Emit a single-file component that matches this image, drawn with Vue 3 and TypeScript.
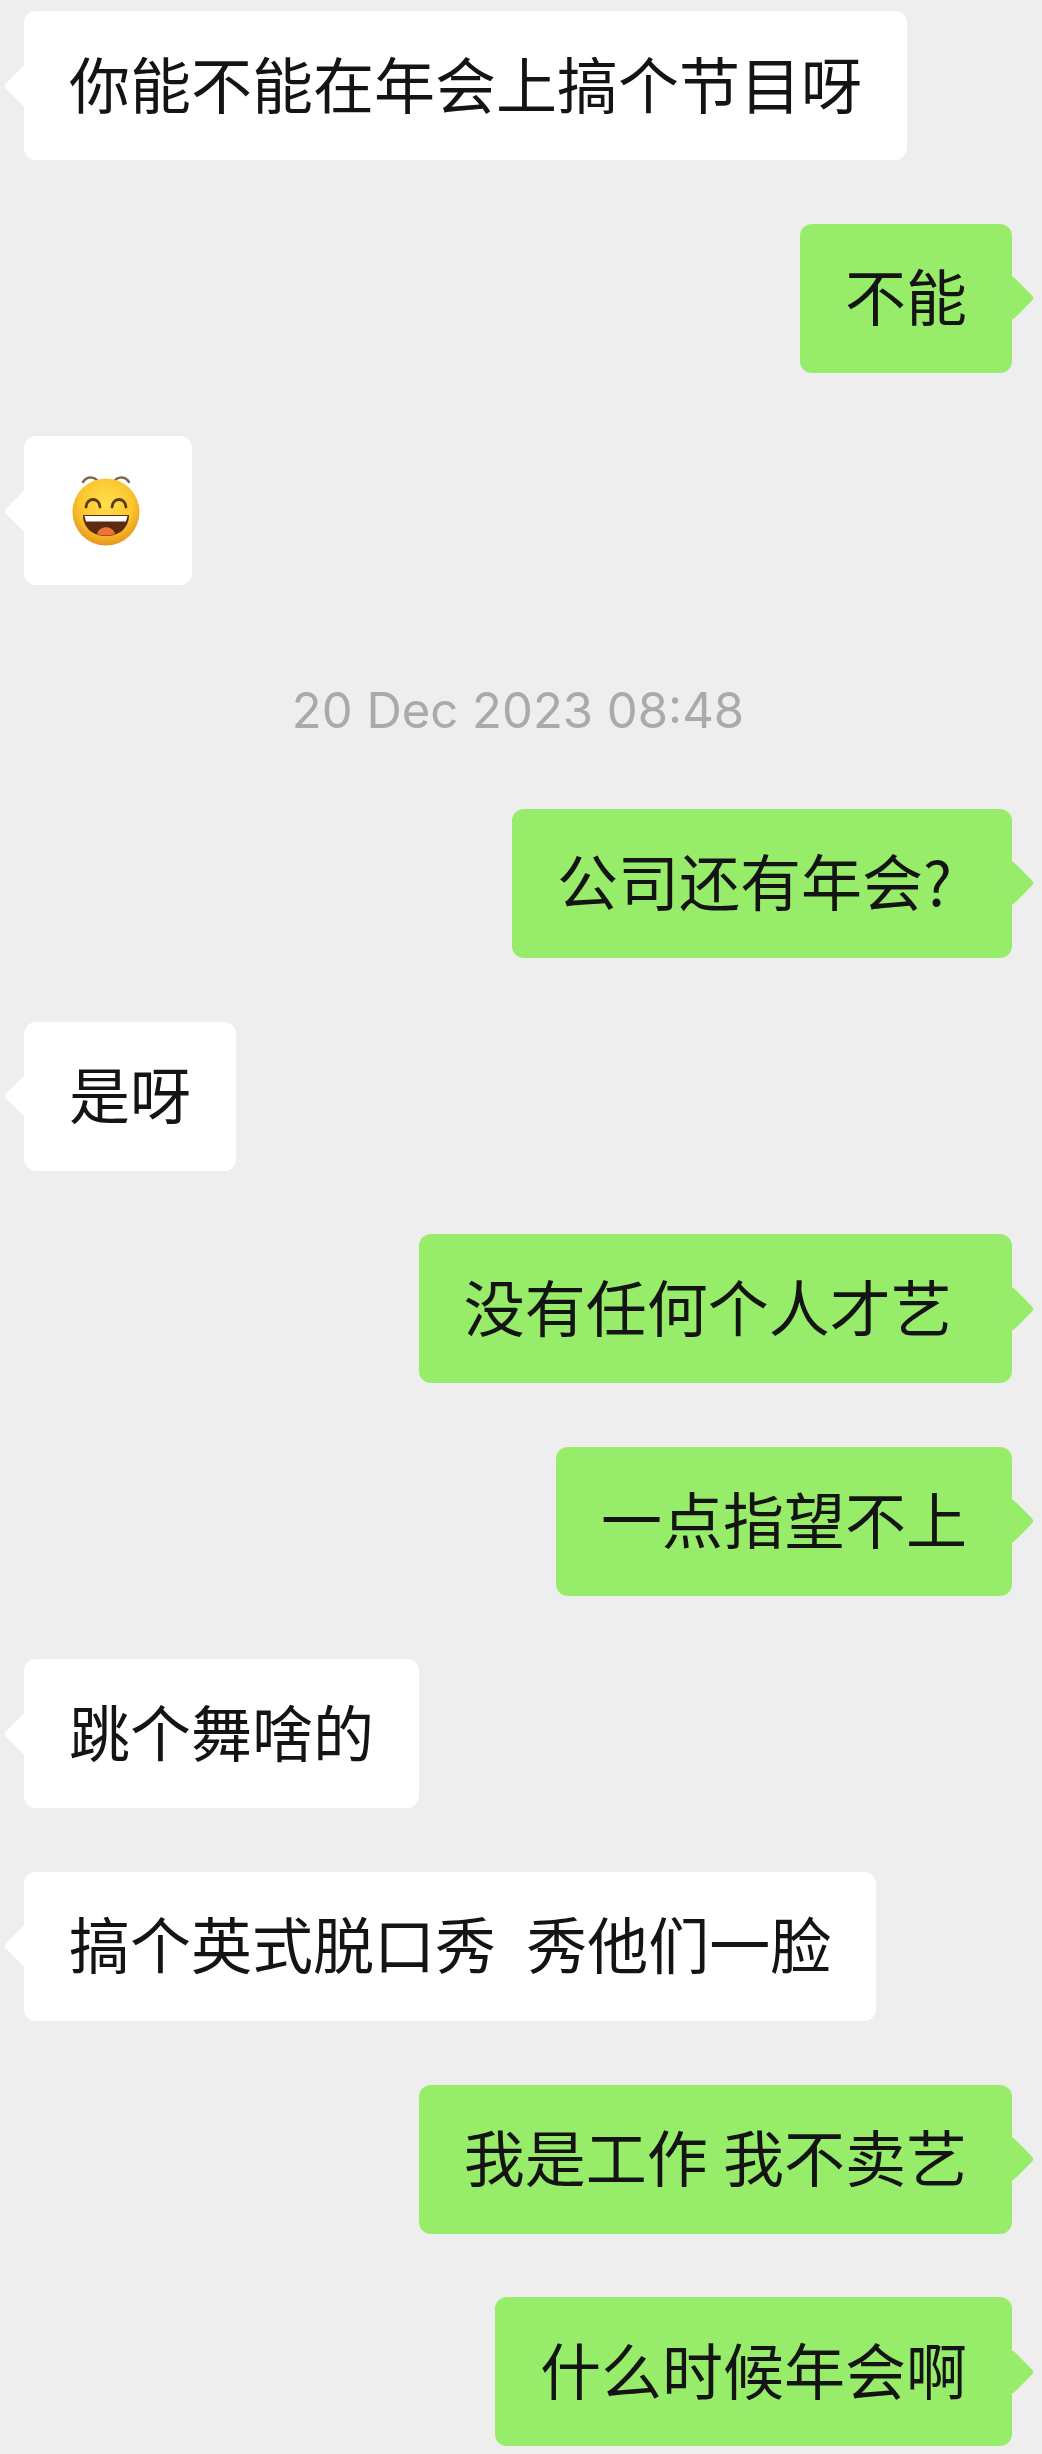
<script setup lang="ts">
interface Item {
  kind: 'left' | 'right' | 'time' | 'emoji'
  text?: string
}

const items: Item[] = [
  { kind: 'left', text: '你能不能在年会上搞个节目呀' },
  { kind: 'right', text: '不能' },
  { kind: 'emoji' },
  { kind: 'time', text: '20 Dec 2023 08:48' },
  { kind: 'right', text: '公司还有年会? ' },
  { kind: 'left', text: '是呀' },
  { kind: 'right', text: '没有任何个人才艺 ' },
  { kind: 'right', text: '一点指望不上' },
  { kind: 'left', text: '跳个舞啥的' },
  { kind: 'left', text: '搞个英式脱口秀  秀他们一脸' },
  { kind: 'right', text: '我是工作 我不卖艺' },
  { kind: 'right', text: '什么时候年会啊' },
]
</script>

<template>
  <main class="chat">
    <template v-for="(item, i) in items" :key="i">
      <div v-if="item.kind === 'time'" class="time">{{ item.text }}</div>
      <div v-else class="row" :class="item.kind === 'right' ? 'row-right' : 'row-left'">
        <div class="bubble" :class="item.kind === 'right' ? 'green' : 'white'">
          <svg v-if="item.kind === 'emoji'" class="emoji" viewBox="0 0 72 80" width="72" height="80">
            <defs>
              <radialGradient id="face" cx="50%" cy="38%" r="62%">
                <stop offset="0%" stop-color="#ffe04a" />
                <stop offset="65%" stop-color="#fbc52e" />
                <stop offset="100%" stop-color="#e8951c" />
              </radialGradient>
            </defs>
            <path d="M13 16C17 10 27 9 30 20M59 16C55 10 45 9 42 20" fill="none" stroke="#7a6a4a" stroke-width="2.400" stroke-linecap="round" />
            <circle cx="36" cy="46" r="33.500" fill="url(#face)" />
            <path d="M16 41C17 31 29 31 30 41M42 41C43 31 55 31 56 41" fill="none" stroke="#5b3a14" stroke-width="2.800" stroke-linecap="round" />
            <path d="M13 49H59C59 62 49 70 36 70C23 70 13 62 13 49Z" fill="#5c2a0e" />
            <path d="M14.500 50H57.500L56 55.500H16Z" fill="#fff" />
            <path d="M27 68C29 59 43 59 45 68C40 70 32 70 27 68Z" fill="#f0703c" />
          </svg>
          <span v-else class="text">{{ item.text }}</span>
        </div>
      </div>
    </template>
  </main>
</template>

<style scoped>
.chat {
  box-sizing: border-box;
  width: 1042px;
  height: 2454px;
  padding: 11px 30px 0 24px;
  display: flex;
  flex-direction: column;
  gap: 63.600px;
  background: #eeeeee;
  overflow: hidden;
  font-family: "Noto Sans CJK SC", "Noto Sans", sans-serif;
}
.row {
  display: flex;
}
.row-right {
  justify-content: flex-end;
}
.row-left {
  justify-content: flex-start;
}
.bubble {
  position: relative;
  box-sizing: border-box;
  height: 149px;
  padding: 0 45px 7px;
  border-radius: 12px;
  display: flex;
  align-items: center;
}
.white {
  background: #ffffff;
}
.green {
  background: #97ec6a;
}
.bubble::before {
  content: "";
  position: absolute;
  top: 58.500px;
  width: 32px;
  height: 32px;
  border-radius: 4px;
  background: inherit;
  transform: rotate(45deg);
}
.white::before {
  left: -14px;
}
.green::before {
  right: -16px;
}
.text {
  font-size: 61px;
  line-height: 1;
  word-spacing: 1.500px;
  color: #141414;
  white-space: pre;
}
.emoji {
  display: block;
  margin: -3px 5px 0 1px;
}
.time {
  box-sizing: border-box;
  height: 96.600px;
  padding-top: 28px;
  line-height: 68.600px;
  text-align: center;
  font-family: Inter, "Liberation Sans", sans-serif;
  font-size: 49px;
  color: #aaaaaa;
}
</style>
